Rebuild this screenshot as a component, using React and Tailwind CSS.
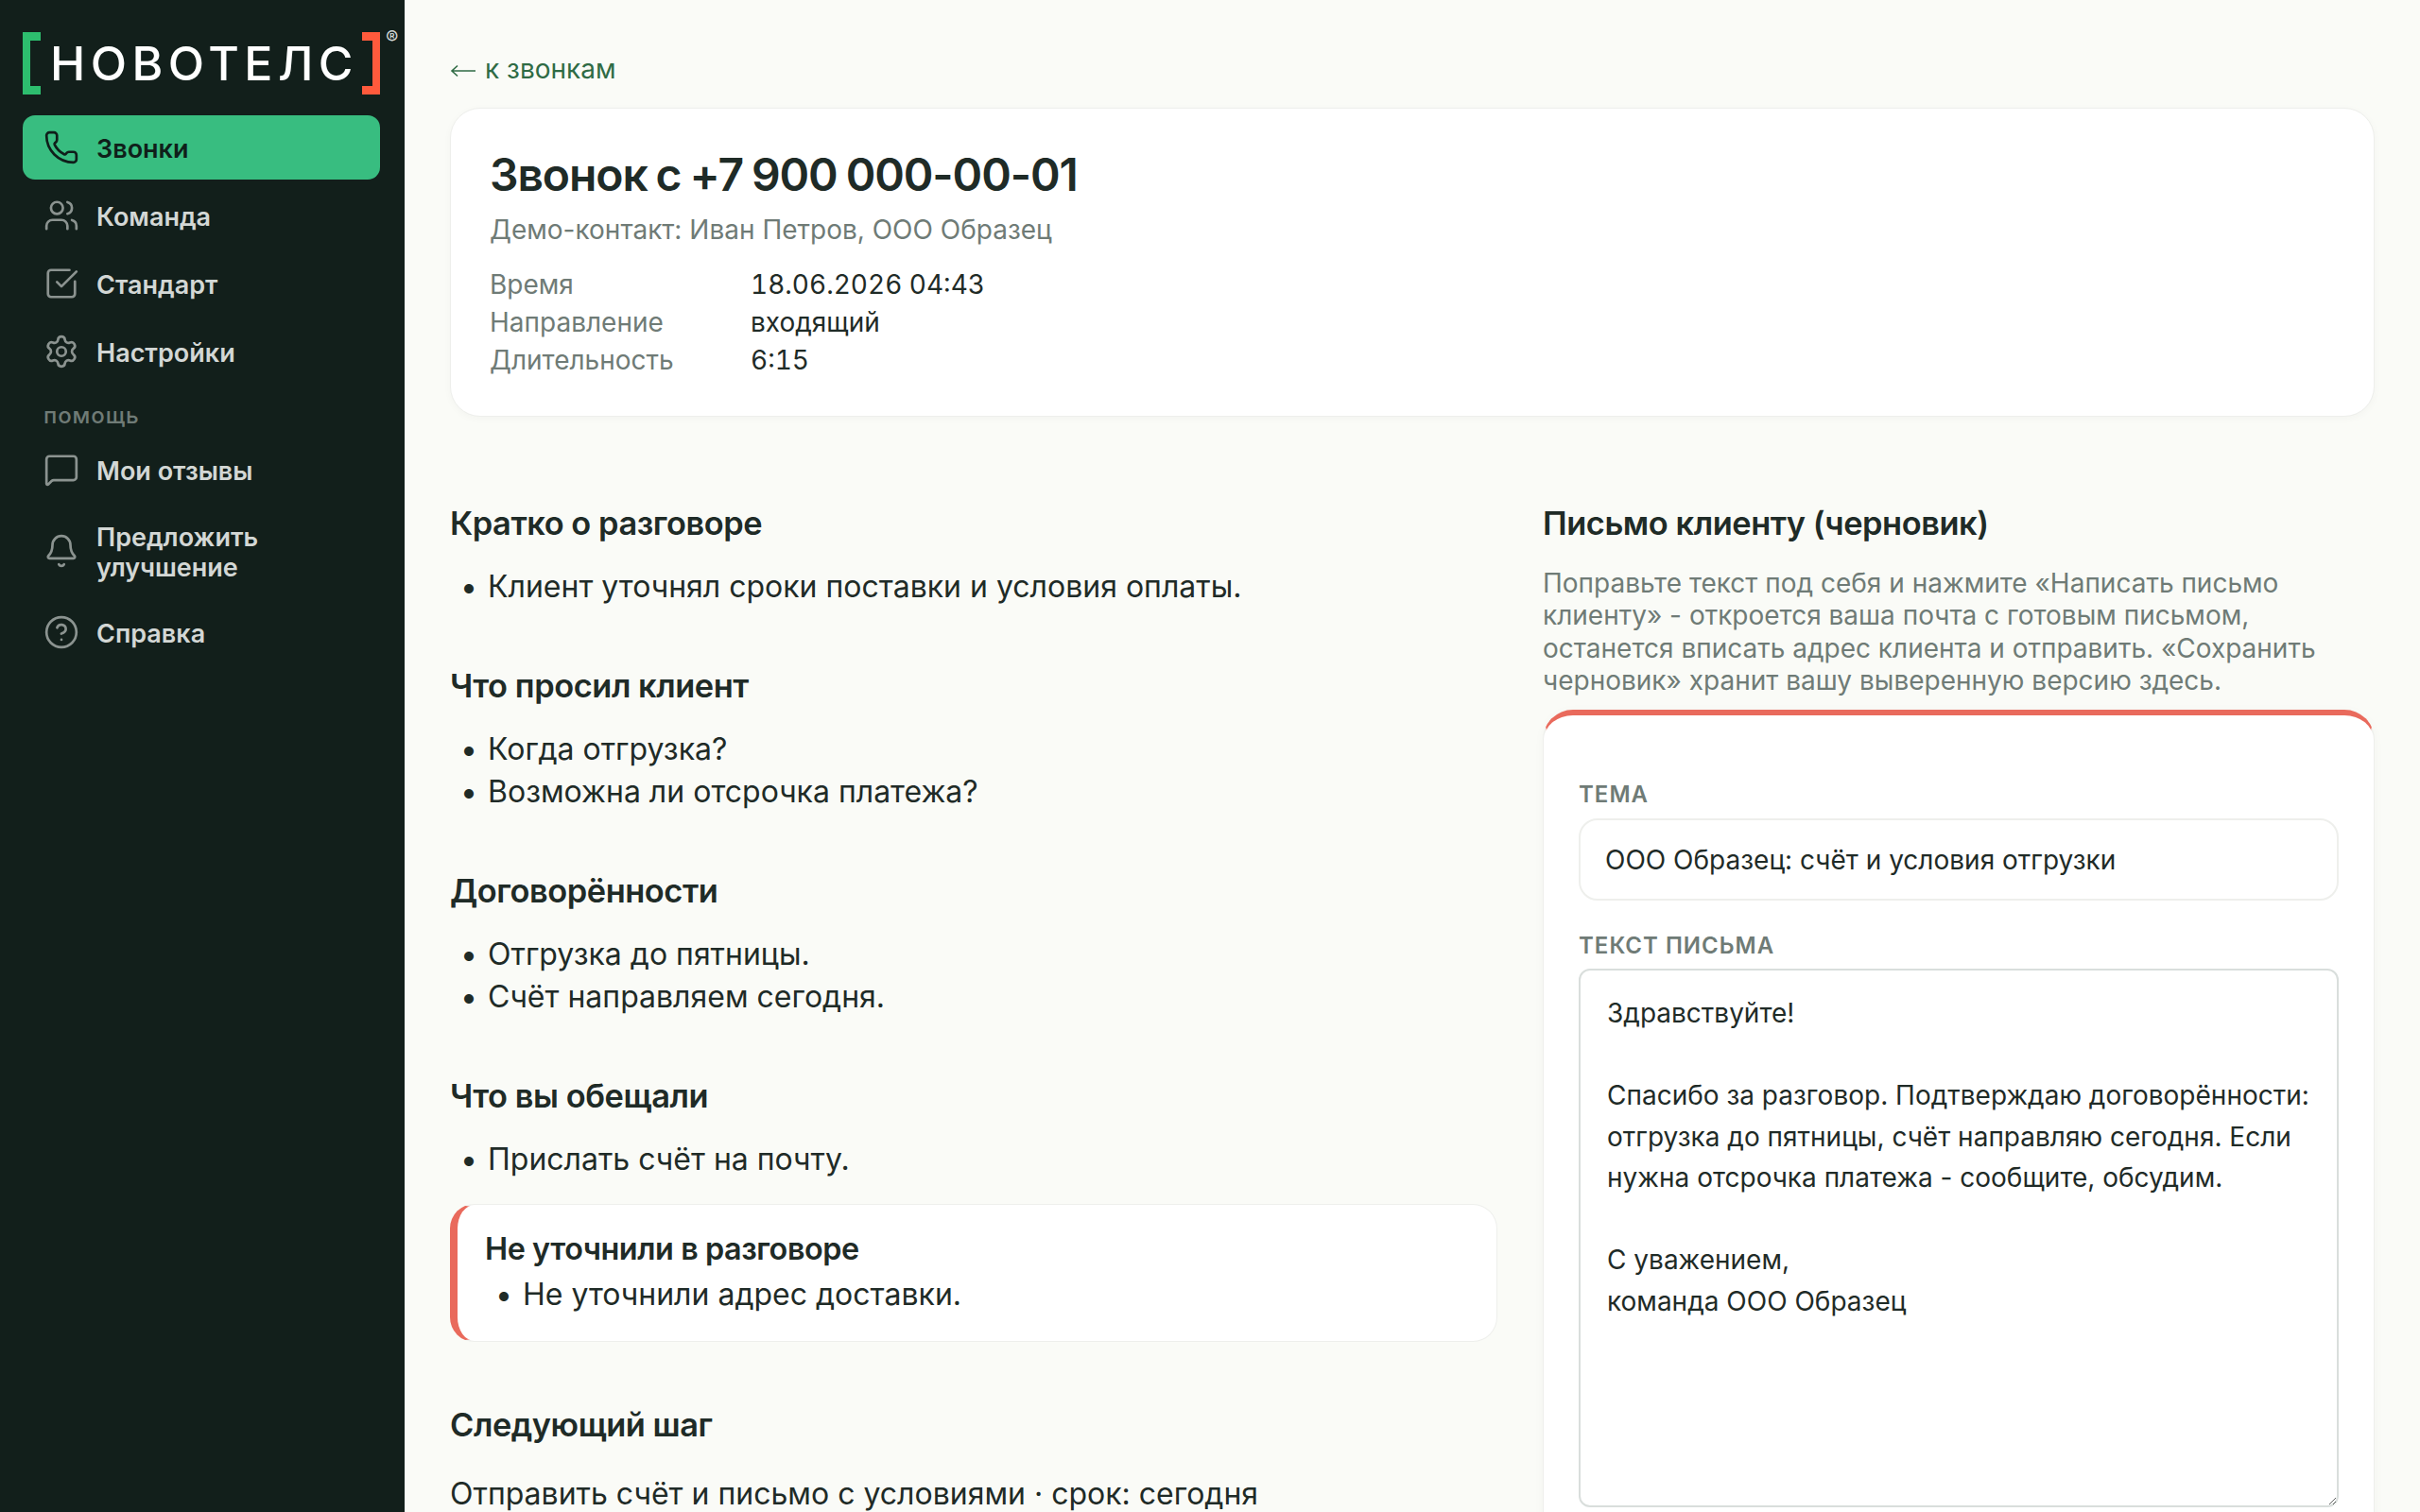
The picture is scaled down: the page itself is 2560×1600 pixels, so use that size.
import React from "react";
import { Phone, Users, SquareCheckBig, Settings, MessageSquare, Bell, CircleHelp } from "lucide-react";

function NavItem({ icon: Icon, active, children }) {
  return (
    <div className={"flex items-center gap-[18px] rounded-[13px] pl-[22px] pr-[16px] py-[16px] text-[27px] leading-[32px] font-semibold " + (active ? "bg-[#38bd80] text-[#0f1f1a]" : "text-[#d3d7d5]")}>
      <Icon size={38} strokeWidth={1.7} className={"-my-[1px] shrink-0 " + (active ? "text-[#0f1f1a]" : "text-[#8b9390]")} />
      <span className="mt-[2px] mb-[-2px]">{children}</span>
    </div>
  );
}

function Section({ title, items, className = "" }) {
  return (
    <section className={className}>
      <h2 className="text-[34.4px] leading-[44px] font-semibold tracking-[-0.45px] text-[#1f2b27]">{title}</h2>
      <ul className="mt-[22px] pl-[11px] text-[32px] leading-[45px] text-[#1f2b27]">
        {items.map((t) => (
          <li key={t} className="flex gap-[11px]"><span>•</span><span>{t}</span></li>
        ))}
      </ul>
    </section>
  );
}

const letter = "Здравствуйте!\n\nСпасибо за разговор. Подтверждаю договорённости: отгрузка до пятницы, счёт направляю сегодня. Если нужна отсрочка платежа - сообщите, обсудим.\n\nС уважением,\nкоманда ООО Образец";

export default function App() {
  return (
    <div className="flex h-screen overflow-hidden bg-[#fafbf7] font-['Inter',sans-serif] text-[#1f2b27]">
      <aside className="w-[428px] shrink-0 bg-[#121f1b] pl-[24px] pr-[26px] pt-[34px]">
        <div className="relative flex h-[66px] w-[378px] items-center justify-between">
          <div className="h-full w-[19px] border-y-[9px] border-l-[8px] border-[#2dbd6e]" />
          <span className="ml-[6px] text-[50px] leading-none font-medium tracking-[5.5px] text-white">НОВОТЕЛС</span>
          <div className="h-full w-[19px] border-y-[9px] border-r-[8px] border-[#ff5a3c]" />
          <span className="absolute left-[384px] top-[-4px] text-[20px] leading-none text-[#d3d7d5]">®</span>
        </div>
        <nav className="mt-[22px] flex flex-col gap-[4px]">
          <NavItem icon={Phone} active>Звонки</NavItem>
          <NavItem icon={Users}>Команда</NavItem>
          <NavItem icon={SquareCheckBig}>Стандарт</NavItem>
          <NavItem icon={Settings}>Настройки</NavItem>
          <div className="mt-[16px] mb-[5px] pl-[22px] text-[24px] leading-[28px] font-medium tracking-[0.9px] text-[#6f7b76]">помощь</div>
          <NavItem icon={MessageSquare}>Мои отзывы</NavItem>
          <NavItem icon={Bell}>Предложить улучшение</NavItem>
          <NavItem icon={CircleHelp}>Справка</NavItem>
        </nav>
      </aside>
      <main className="min-w-0 flex-1 pl-[48px] pr-[48px] pt-[56px]">
        <a className="flex items-center gap-[9px] text-[28px] leading-[34px] text-[#2f6b45]">
          <svg width="28" height="16" viewBox="0 0 28 16" fill="none" stroke="currentColor" strokeWidth="1.6" className="mt-[3px] shrink-0">
            <path d="M27 8H2M8 2.5 2 8l6 5.5" />
          </svg>
          <span>к звонкам</span>
        </a>
        <div className="mt-[24px] rounded-[32px] border border-[#eeefec] bg-white px-[41px] pt-[40px] pb-[39px] shadow-[0_2px_8px_rgba(0,0,0,0.03)]">
          <h1 className="text-[48px] leading-[60px] font-semibold tracking-[-1.1px] [word-spacing:-2px] text-[#1f2b27]">Звонок с +7 900 000-00-01</h1>
          <div className="mt-[9px] text-[28px] leading-[38px] text-[#6f7b76]">Демо-контакт: Иван Петров, ООО Образец</div>
          <dl className="mt-[19px] grid grid-cols-[276px_1fr] text-[28px] leading-[40px]">
            <dt className="text-[#6f7b76]">Время</dt><dd className="text-[#1f2b27] tabular-nums">18.06.2026 04:43</dd>
            <dt className="text-[#6f7b76]">Направление</dt><dd className="text-[#1f2b27] tabular-nums">входящий</dd>
            <dt className="text-[#6f7b76]">Длительность</dt><dd className="text-[#1f2b27] tabular-nums">6:15</dd>
          </dl>
        </div>
        <div className="mt-[91px] grid grid-cols-[1108px_880px] gap-x-[48px]">
          <div>
            <Section title="Кратко о разговоре" items={["Клиент уточнял сроки поставки и условия оплаты."]} />
            <Section className="mt-[61px]" title="Что просил клиент" items={["Когда отгрузка?", "Возможна ли отсрочка платежа?"]} />
            <Section className="mt-[61px]" title="Договорённости" items={["Отгрузка до пятницы.", "Счёт направляем сегодня."]} />
            <Section className="mt-[61px]" title="Что вы обещали" items={["Прислать счёт на почту."]} />
            <div className="mt-[25px] rounded-[26px] border border-l-[8px] border-[#eeefec] border-l-[#e96a5c] bg-white pl-[29px] pr-[24px] pt-[25px] pb-[27px]">
              <div className="text-[32.4px] leading-[44px] font-semibold tracking-[-0.45px]">Не уточнили в разговоре</div>
              <div className="mt-[3px] flex gap-[11px] pl-[11px] text-[32px] leading-[45px]"><span>•</span><span>Не уточнили адрес доставки.</span></div>
            </div>
            <section className="mt-[66px]">
              <h2 className="text-[34.4px] leading-[44px] font-semibold tracking-[-0.45px]">Следующий шаг</h2>
              <p className="mt-[28px] text-[32px] leading-[45px]">Отправить счёт и письмо с условиями · срок: сегодня</p>
            </section>
          </div>
          <div>
            <h2 className="text-[34.4px] leading-[44px] font-semibold tracking-[-0.45px]">Письмо клиенту (черновик)</h2>
            <p className="mt-[24px] text-[28px] leading-[34.3px] text-[#6f7b76]">Поправьте текст под себя и нажмите «Написать письмо клиенту» - откроется ваша почта с готовым письмом, останется вписать адрес клиента и отправить. «Сохранить черновик» хранит вашу выверенную версию здесь.</p>
            <div className="mt-[14px] rounded-[32px] border border-t-[6px] border-[#eeefec] border-t-[#e96a5c] bg-white px-[37px] pt-[69px] pb-[40px] shadow-[0_2px_12px_rgba(0,0,0,0.03)]">
              <label className="block text-[24px] leading-[30px] font-semibold tracking-[1px] text-[#6f7b76]">ТЕМА</label>
              <input readOnly value="ООО Образец: счёт и условия отгрузки" className="mt-[10px] block h-[87px] w-full rounded-[20px] border-2 border-[#eeefec] bg-white px-[26px] text-[28px] text-[#1f2b27] outline-none" />
              <label className="mt-[33px] block text-[24px] leading-[30px] font-semibold tracking-[1px] text-[#6f7b76]">ТЕКСТ ПИСЬМА</label>
              <textarea readOnly value={letter} className="mt-[9px] block h-[570px] w-full rounded-[12px] border-2 border-[#d9dedc] bg-white px-[28px] py-[24px] text-[28px] leading-[43.5px] text-[#1f2b27] outline-none" />
            </div>
          </div>
        </div>
      </main>
    </div>
  );
}
